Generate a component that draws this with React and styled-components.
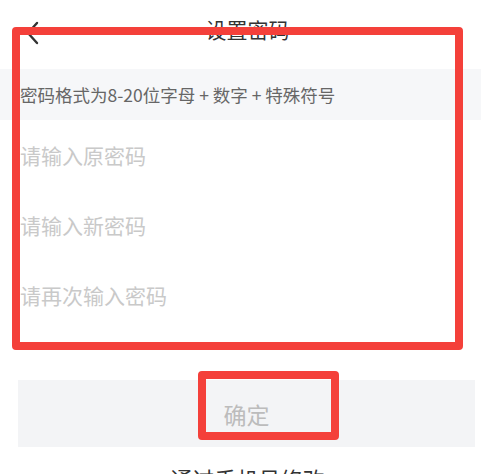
import React from "react"
import styled, { createGlobalStyle } from "styled-components"

const GlobalStyle = createGlobalStyle`
  html, body {
    margin: 0;
    padding: 0;
    background: #ffffff;
    font-family: "Noto Sans CJK SC", "Noto Sans", sans-serif;
  }
  * { box-sizing: border-box; }
`

const Page = styled.div`
  position: relative;
  display: flex;
  flex-direction: column;
  width: 481px;
  height: 474px;
  overflow: hidden;
  background: #fff;

  & > * {
    flex-shrink: 0;
  }
`

const Header = styled.header`
  display: grid;
  grid-template-columns: 58px 1fr 58px;
  align-items: center;
  height: 69px;
  padding-bottom: 3px;
`

const BackButton = styled.button`
  display: flex;
  align-items: center;
  justify-content: flex-start;
  padding: 0 0 0 26px;
  border: none;
  background: none;
  color: #333;
`

const Title = styled.h1`
  margin: 0;
  padding: 0 0 8px 14px;
  text-align: center;
  font-size: 21px;
  font-weight: 400;
  color: #333;
`

const Hint = styled.div`
  display: flex;
  align-items: center;
  height: 51px;
  padding-left: 20px;
  background: #f6f7f9;
  font-size: 17.5px;
  color: #666;
  white-space: nowrap;
`

const Form = styled.div`
  display: flex;
  flex-direction: column;
`

const Field = styled.input`
  height: 70px;
  padding: 0 0 0 20px;
  border: none;
  outline: none;
  background: transparent;
  font-family: inherit;
  font-size: 21px;
  color: #333;

  &::placeholder {
    color: #c9c9c9;
  }
`

const Submit = styled.button`
  display: flex;
  align-items: center;
  justify-content: center;
  height: 67px;
  margin: 50px 6px 0 18px;
  border: none;
  background: #f3f4f6;
  font-family: inherit;
  font-size: 23px;
  color: #bcbcbc;
`

const AltLink = styled.div`
  margin-top: 16px;
  padding-left: 14px;
  text-align: center;
  font-size: 22px;
  line-height: 30px;
  color: #333;
`

const Mark = styled.div`
  position: absolute;
  left: ${p => p.$x}px;
  top: ${p => p.$y}px;
  width: ${p => p.$w}px;
  height: ${p => p.$h}px;
  border: 8px solid #f4403a;
  border-radius: 4px;
  pointer-events: none;
`

const fields = ["请输入原密码", "请输入新密码", "请再次输入密码"]

export default function App() {
  return (
    <Page>
      <GlobalStyle />
      <Header>
        <BackButton aria-label="返回">
          <svg width="14" height="24" viewBox="0 0 14 24" fill="none">
            <path d="M11 2 L2 12 L11 22" stroke="#333" strokeWidth="2.4" strokeLinecap="round" strokeLinejoin="round" />
          </svg>
        </BackButton>
        <Title>设置密码</Title>
        <span />
      </Header>
      <Hint>密码格式为8-20位字母 + 数字 + 特殊符号</Hint>
      <Form>
        {fields.map(f => (
          <Field key={f} type="password" placeholder={f} />
        ))}
      </Form>
      <Submit>确定</Submit>
      <AltLink>通过手机号修改</AltLink>
      <Mark $x={12} $y={27} $w={451} $h={323} />
      <Mark $x={198} $y={371} $w={141} $h={69} />
    </Page>
  )
}
